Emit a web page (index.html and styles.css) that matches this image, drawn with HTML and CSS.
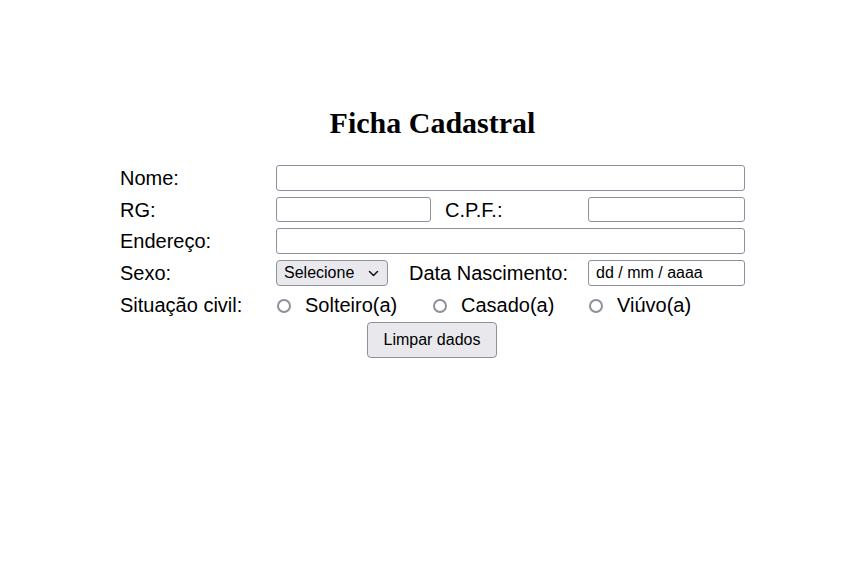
FILE: index.html
```html
<!DOCTYPE html>
<html lang="pt-BR">
<head>
<meta charset="utf-8">
<title>Ficha Cadastral</title>
<link rel="stylesheet" href="styles.css">
</head>
<body>
<form class="ficha">
  <h1 class="titulo">Ficha Cadastral</h1>
  <div class="linha">
    <label class="rotulo">Nome:</label>
    <input class="campo campo-largo" type="text">
  </div>
  <div class="linha linha-estreita">
    <label class="rotulo">RG:</label>
    <input class="campo campo-rg" type="text">
    <label class="rotulo rotulo-cpf">C.P.F.:</label>
    <input class="campo campo-cpf" type="text">
  </div>
  <div class="linha">
    <label class="rotulo">Endereço:</label>
    <input class="campo campo-largo" type="text">
  </div>
  <div class="linha">
    <label class="rotulo">Sexo:</label>
    <span class="seletor">
      <select class="select">
        <option>Selecione</option>
        <option>Masculino</option>
        <option>Feminino</option>
      </select>
      <svg class="seta" width="11" height="7" viewBox="0 0 11 7"><path d="M1.5 1.5l4 4 4-4" fill="none" stroke="#1a1a1a" stroke-width="1.6" stroke-linecap="round" stroke-linejoin="round"/></svg>
    </span>
    <label class="rotulo rotulo-data">Data Nascimento:</label>
    <input class="campo campo-data" type="text" placeholder="dd / mm / aaaa">
  </div>
  <div class="linha">
    <label class="rotulo">Situação civil:</label>
    <label class="opcao"><input class="radio" type="radio" name="civil"><span>Solteiro(a)</span></label>
    <label class="opcao"><input class="radio" type="radio" name="civil"><span>Casado(a)</span></label>
    <label class="opcao"><input class="radio" type="radio" name="civil"><span>Viúvo(a)</span></label>
  </div>
  <div class="linha-botao">
    <button class="botao" type="reset">Limpar dados</button>
  </div>
</form>
</body>
</html>
```

FILE: styles.css
```css
html, body {
  margin: 0;
  padding: 0;
  background: #ffffff;
}

body {
  font-family: "Liberation Sans", Arial, sans-serif;
  color: #000;
}

.ficha {
  width: 625px;
  margin-left: 120px;
  padding-top: 106px;
}

.titulo {
  margin: 0 0 25px 0;
  font-family: "Liberation Serif", "Times New Roman", serif;
  font-size: 30px;
  font-weight: bold;
  line-height: 34px;
  text-align: center;
}

.linha {
  display: flex;
  align-items: center;
  height: 26px;
  margin-bottom: 6px;
  font-size: 20px;
  line-height: 26px;
}

.linha-estreita {
  height: 25px;
}

.rotulo {
  width: 156px;
  flex: none;
}

.rotulo-cpf {
  width: 143px;
  margin-left: 14px;
}

.rotulo-data {
  width: 179px;
  margin-left: 21px;
}

.campo {
  box-sizing: border-box;
  height: 26px;
  border: 1px solid #8f8f9d;
  border-radius: 3px;
  background: #fff;
  padding: 0 7px;
  font-family: "Liberation Sans", Arial, sans-serif;
  font-size: 16px;
  flex: none;
  margin: 0;
}

.campo-largo { width: 469px; }
.campo-rg { width: 155px; height: 25px; }
.campo-cpf { width: 157px; height: 25px; }
.campo-data { width: 157px; }

.campo-data::placeholder {
  color: #000;
  opacity: 1;
}

.seletor {
  position: relative;
  display: block;
  flex: none;
  width: 112px;
  height: 26px;
}

.select {
  appearance: none;
  -webkit-appearance: none;
  display: block;
  box-sizing: border-box;
  width: 112px;
  height: 26px;
  margin: 0;
  padding: 0 0 0 7px;
  border: 1px solid #8f8f9d;
  border-radius: 4px;
  background: #e9e9ed;
  color: #000;
  font-family: "Liberation Sans", Arial, sans-serif;
  font-size: 16px;
  line-height: 24px;
}

.seta {
  position: absolute;
  right: 9px;
  top: 10px;
  pointer-events: none;
}

.opcao {
  display: flex;
  align-items: center;
  width: 156px;
  flex: none;
}

.radio {
  appearance: none;
  -webkit-appearance: none;
  box-sizing: border-box;
  width: 14px;
  height: 14px;
  margin: 1px 14px 0 1px;
  border: 2px solid #8f8f9d;
  border-radius: 50%;
  background: #fff;
  flex: none;
}

.linha-botao {
  padding-left: 247px;
  margin-top: -2px;
}

.botao {
  box-sizing: border-box;
  width: 130px;
  height: 36px;
  margin: 0;
  padding: 0;
  border: 1px solid #8f8f9d;
  border-radius: 4px;
  background: #e9e9ed;
  color: #000;
  font-family: "Liberation Sans", Arial, sans-serif;
  font-size: 16px;
}
```
